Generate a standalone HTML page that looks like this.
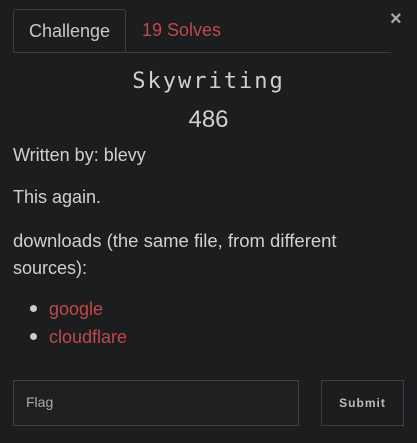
<!DOCTYPE html>
<html><head><style>
body{margin:0;width:417px;height:443px;background:#1c1d1f;font-family:"Liberation Sans",sans-serif;color:#d0d0d0;position:relative;overflow:hidden}
.a{position:absolute;white-space:nowrap}
.tab{left:13px;top:9px;width:111px;height:43px;border:1px solid #3c3d40;border-bottom:none;border-radius:3px 3px 0 0;font-size:18px;line-height:43px;text-align:center;color:#c8c8c8}
.line{left:13px;top:52px;width:378px;height:1px;background:#3c3d40}
.red{color:#c0484b}
</style></head><body>
<div class="a tab">Challenge</div>
<div class="a red" style="left:142px;top:20px;font-size:18px">19 Solves</div>
<div class="a line"></div>
<div class="a" style="left:390px;top:8px;font-size:20px;font-weight:bold;color:#aaa">×</div>
<div class="a" style="left:0;width:417px;text-align:center;top:69px;font-family:'DejaVu Sans Mono',monospace;font-size:22px;letter-spacing:2px;color:#d0d0d0">Skywriting</div>
<div class="a" style="left:0;width:417px;text-align:center;top:106px;font-size:24px;color:#d0d0d0">486</div>
<div class="a" style="left:13px;top:145px;font-size:18px">Written by: blevy</div>
<div class="a" style="left:13px;top:187px;font-size:18px">This again.</div>
<div class="a" style="left:13px;top:230px;font-size:18.5px">downloads (the same file, from different</div>
<div class="a" style="left:13px;top:258px;font-size:18px">sources):</div>
<div class="a" style="left:30px;top:305px;width:7px;height:7px;border-radius:50%;background:#ccc"></div>
<div class="a red" style="left:49px;top:299px;font-size:18px">google</div>
<div class="a" style="left:30px;top:333px;width:7px;height:7px;border-radius:50%;background:#ccc"></div>
<div class="a red" style="left:49px;top:327px;font-size:18px">cloudflare</div>
<div class="a" style="left:13px;top:380px;width:284px;height:44px;border:1px solid #3e3f42;background:#1f2020"></div>
<div class="a" style="left:26px;top:394px;font-size:14px;color:#aaa">Flag</div>
<div class="a" style="left:321px;top:380px;width:81px;height:44px;border:1px solid #3e3f42;text-align:center;line-height:44px;font-size:12px;font-weight:bold;letter-spacing:1px;color:#bbb">Submit</div>
</body></html>
